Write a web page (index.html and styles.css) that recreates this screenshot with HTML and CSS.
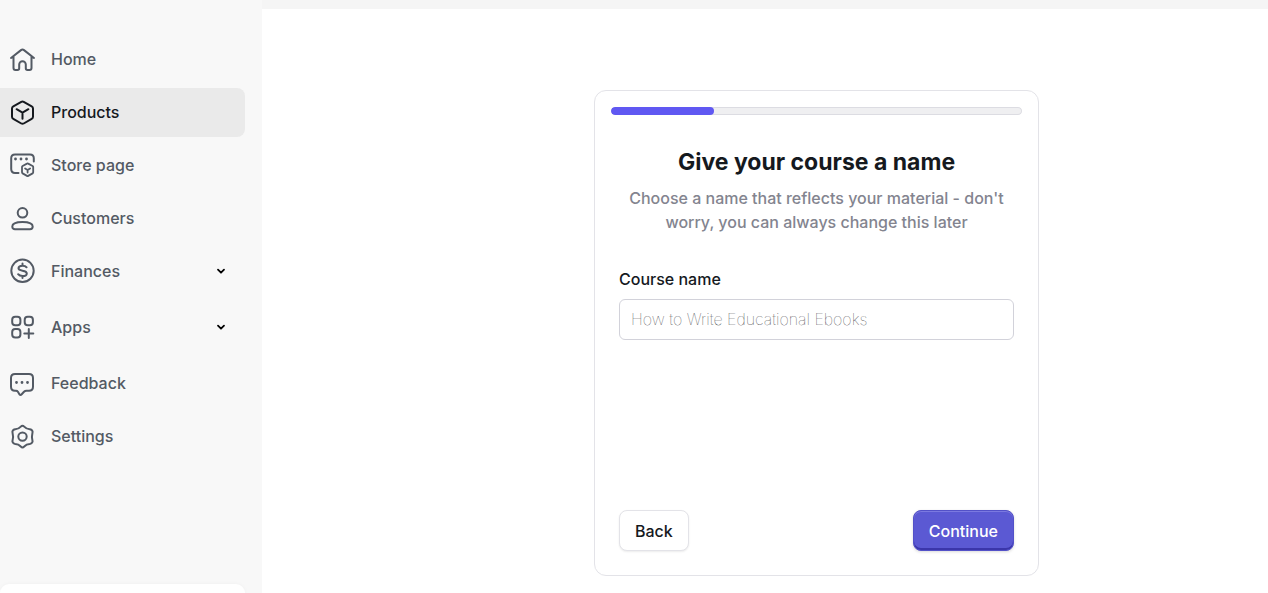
FILE: index.html
```html
<!DOCTYPE html>
<html lang="en">
<head>
    <meta charset="UTF-8">
    <meta name="viewport" content="width=device-width, initial-scale=1.0">
    <title>Give your course a name</title>
    <link rel="stylesheet" href="styles.css">
</head>
<body>
    <aside class="sidebar">
        <nav class="nav">
            <a class="nav-item" href="#">
                <svg class="icon" viewBox="0 0 27 27"><path d="M2 12 L12 4.1 Q13.5 2.9 15 4.1 L25 12 M4.5 10.5 V22 Q4.5 24 6.5 24 H8.5 Q10.2 24 10.2 22.3 V18.5 A3.3 3.3 0 0 1 16.8 18.5 V22.3 Q16.8 24 18.5 24 H20.5 Q22.5 24 22.5 22 V10.5"/></svg>
                <span>Home</span>
            </a>
            <a class="nav-item active" href="#">
                <svg class="icon" viewBox="0 0 27 27"><path d="M12.3 2.8 Q13.5 2.1 14.7 2.8 L22.7 7.3 Q24 8 24 9.5 V17.7 Q24 19.2 22.7 19.9 L14.7 24.5 Q13.5 25.2 12.3 24.5 L4.3 19.9 Q3 19.2 3 17.7 V9.5 Q3 8 4.3 7.3 Z M7.6 10.2 L13.5 13.6 L19.4 10.2 M13.5 13.6 V19.8"/></svg>
                <span>Products</span>
            </a>
            <a class="nav-item" href="#">
                <svg class="icon" viewBox="0 0 27 27"><path d="M9.5 20.9 H6 Q2.2 20.9 2.2 17.1 V6.2 Q2.2 2.4 6 2.4 H21 Q24.8 2.4 24.8 6.2 V9.4"/><path class="thin" d="M18 11.6 Q18.6 11.2 19.2 11.6 L23.6 14 Q24.2 14.4 24.2 15.1 V20.3 Q24.2 21 23.6 21.4 L19.2 23.9 Q18.6 24.3 18 23.9 L13.6 21.4 Q13 21 13 20.3 V15.1 Q13 14.4 13.6 14 Z M16.1 16.5 L18.6 18 L21.1 16.5 M18.6 18 V20.6"/><path class="dots" d="M6.5 7 h.01 M12 7 h.01 M17.5 7 h.01"/></svg>
                <span>Store page</span>
            </a>
            <a class="nav-item" href="#">
                <svg class="icon" viewBox="0 0 27 27"><circle cx="13.5" cy="7.8" r="4.8"/><path d="M3.3 21.5 C3.3 18.3 8.2 17 13.5 17 S23.7 18.3 23.7 21.5 C23.7 23.5 22.6 24.2 21 24.2 H6 C4.4 24.2 3.3 23.5 3.3 21.5 Z"/></svg>
                <span>Customers</span>
            </a>
            <button class="nav-item group" type="button" aria-expanded="false">
                <svg class="icon" viewBox="0 0 27 27"><circle cx="13.5" cy="12.8" r="11.2"/><path d="M17.6 9.3 C16.8 8.2 15.5 7.7 13.5 7.7 C11.1 7.7 9.5 8.7 9.5 10.3 C9.5 13.8 17.8 11.6 17.8 15.4 C17.8 17.1 16 18 13.5 18 C11.4 18 10 17.4 9.1 16.2 M13.5 5.6 V7.7 M13.5 18 V20.1"/></svg>
                <span>Finances</span>
                <svg class="chevron" viewBox="0 0 10 10"><path d="M2 2.7 L5 5.7 L8 2.7"/></svg>
            </button>
            <button class="nav-item group" type="button" aria-expanded="false">
                <svg class="icon" viewBox="0 0 27 27"><rect x="3.2" y="2.8" width="8.2" height="8.4" rx="3"/><rect x="15.7" y="2.8" width="8.2" height="8.4" rx="3"/><rect x="3.2" y="15.1" width="8.2" height="8.4" rx="3"/><path d="M19.8 15 V24 M15.3 19.5 H24.3"/></svg>
                <span>Apps</span>
                <svg class="chevron" viewBox="0 0 10 10"><path d="M2 2.7 L5 5.7 L8 2.7"/></svg>
            </button>
            <a class="nav-item" href="#">
                <svg class="icon" viewBox="0 0 27 27"><path d="M6 4 H20 Q24 4 24 8 V16.8 Q24 20.8 20 20.8 H17.5 Q16 20.8 15 21.8 L12.7 24.3 Q11.5 25.5 10.4 24.3 L8.9 21.8 Q8.2 20.8 7 20.8 H6 Q2 20.8 2 16.8 V8 Q2 4 6 4 Z"/><path class="dots" d="M7.5 12.5 h.01 M13 12.5 h.01 M18.5 12.5 h.01"/></svg>
                <span>Feedback</span>
            </a>
            <a class="nav-item" href="#">
                <svg class="icon" viewBox="0 0 27 27"><path d="M11.8 3.6 Q13.5 1.8 15.2 3.6 C17 5.6 18.2 6.2 20.7 6.2 Q23.2 6.4 23.6 8.7 C22.7 12 22.7 15.1 23.6 18.4 Q23.2 20.7 20.7 20.9 C18.2 20.9 17 21.5 15.2 23.5 Q13.5 25.3 11.8 23.5 C10 21.5 8.8 20.9 6.3 20.9 Q3.8 20.7 3.4 18.4 C4.3 15.1 4.3 12 3.4 8.7 Q3.8 6.4 6.3 6.2 C8.8 6.2 10 5.6 11.8 3.6 Z"/><circle cx="13.5" cy="13.6" r="4.2"/></svg>
                <span>Settings</span>
            </a>
        </nav>
        <div class="account-card"></div>
    </aside>

    <div class="page">
        <div class="topbar"></div>
        <main class="content">
            <form class="card">
                <progress class="progress" value="25" max="100" aria-label="Progress"></progress>
                <div class="card-body">
                    <h1>Give your course a name</h1>
                    <p class="subtitle">Choose a name that reflects your material - don't worry, you can always change this later</p>
                    <label for="course-name">Course name</label>
                    <input class="text-input" type="text" id="course-name" placeholder="How to Write Educational Ebooks">
                    <div class="actions">
                        <button class="btn" type="button">Back</button>
                        <button class="btn btn-primary" type="submit">Continue</button>
                    </div>
                </div>
            </form>
        </main>
    </div>
</body>
</html>
```
FILE: styles.css
```css
* {
    margin: 0;
    padding: 0;
    box-sizing: border-box;
}

body {
    display: flex;
    height: 100vh;
    overflow: hidden;
    font-family: Inter, "Liberation Sans", sans-serif;
    font-size: 16px;
    font-weight: 500;
    color: #15191e;
    background: #fff;
}

button,
input {
    font: inherit;
}

/* Sidebar */
.sidebar {
    display: flex;
    flex-direction: column;
    justify-content: space-between;
    flex: 0 0 262px;
    padding: 35px 17px 0 0;
    background: #f8f8f8;
}

.nav {
    display: flex;
    flex-direction: column;
    gap: 4px;
}

.nav-item {
    display: flex;
    align-items: center;
    gap: 15px;
    height: 49px;
    padding: 0 19px 0 9px;
    border: 0;
    border-radius: 0 8px 8px 0;
    background: none;
    color: #535a64;
    text-align: left;
    text-decoration: none;
    cursor: pointer;
}

.nav-item span {
    padding-bottom: 2px;
}

.nav-item.active {
    background: #eaeaea;
    color: #15191e;
}

.nav-item.group {
    margin-bottom: 3px;
}

.icon {
    width: 27px;
    height: 27px;
    fill: none;
    stroke: currentColor;
    stroke-width: 2;
    stroke-linecap: round;
    stroke-linejoin: round;
}

.icon .thin {
    stroke-width: 1.8;
}

.icon .dots {
    stroke-width: 2.8;
}

.chevron {
    width: 10px;
    height: 10px;
    margin-left: auto;
    fill: none;
    stroke: #000;
    stroke-width: 1.8;
    stroke-linecap: round;
    stroke-linejoin: round;
}

.account-card {
    height: 9px;
    border-radius: 9px 9px 0 0;
    background: #fff;
    box-shadow: 0 0 4px rgba(0, 0, 0, 0.04);
}

/* Main area */
.page {
    flex: 1;
}

.topbar {
    height: 9px;
    background: #f5f5f5;
}

.content {
    display: flex;
    justify-content: center;
    padding: 81px 0 17px 103px;
}

.card {
    display: flex;
    flex-direction: column;
    width: 100%;
    max-width: 445px;
    min-height: 486px;
    padding: 16px 16px 24px;
    border: 1px solid #e3e3e8;
    border-radius: 12px;
}

.progress {
    display: block;
    width: 100%;
    height: 8px;
    border: 0;
    border-radius: 4px;
    background: none;
    overflow: hidden;
    appearance: none;
}

.progress::-webkit-progress-bar {
    border-radius: 4px;
    background: #efeff1;
    box-shadow: inset 0 0 0 1px #dcdce2;
}

.progress::-webkit-progress-value {
    border-radius: 4px;
    background: #6058f2;
}

.card-body {
    display: flex;
    flex-direction: column;
    flex: 1;
    padding: 31px 8px 0;
}

h1 {
    font-size: 23px;
    font-weight: 700;
    line-height: 32px;
    text-align: center;
}

.subtitle {
    margin: 8px 0 33px;
    color: #83848f;
    line-height: 24px;
    text-align: center;
}

label {
    margin-bottom: 8px;
    line-height: 24px;
}

.text-input {
    width: 100%;
    height: 41px;
    padding: 0 11px 1px;
    border: 1px solid #d2d2da;
    border-radius: 6px;
    background: #fff;
    color: #15191e;
}

.text-input::placeholder {
    color: #3a3a3e;
    font-weight: 100;
}

.actions {
    display: flex;
    justify-content: space-between;
    margin-top: auto;
}

.btn {
    height: 41px;
    padding: 0 15px;
    border: 1px solid #e3e3e8;
    border-radius: 8px;
    background: #fff;
    box-shadow: 0 1px 2px rgba(0, 0, 0, 0.08);
    color: #15191e;
    cursor: pointer;
}

.btn-primary {
    border-color: #5351c8;
    background: #5b59d3;
    box-shadow: inset 0 1px 0 #7b79e0, inset 0 -2px 0 #3b36aa, 0 1px 3px rgba(0, 0, 0, 0.15);
    color: #fff;
}
```
